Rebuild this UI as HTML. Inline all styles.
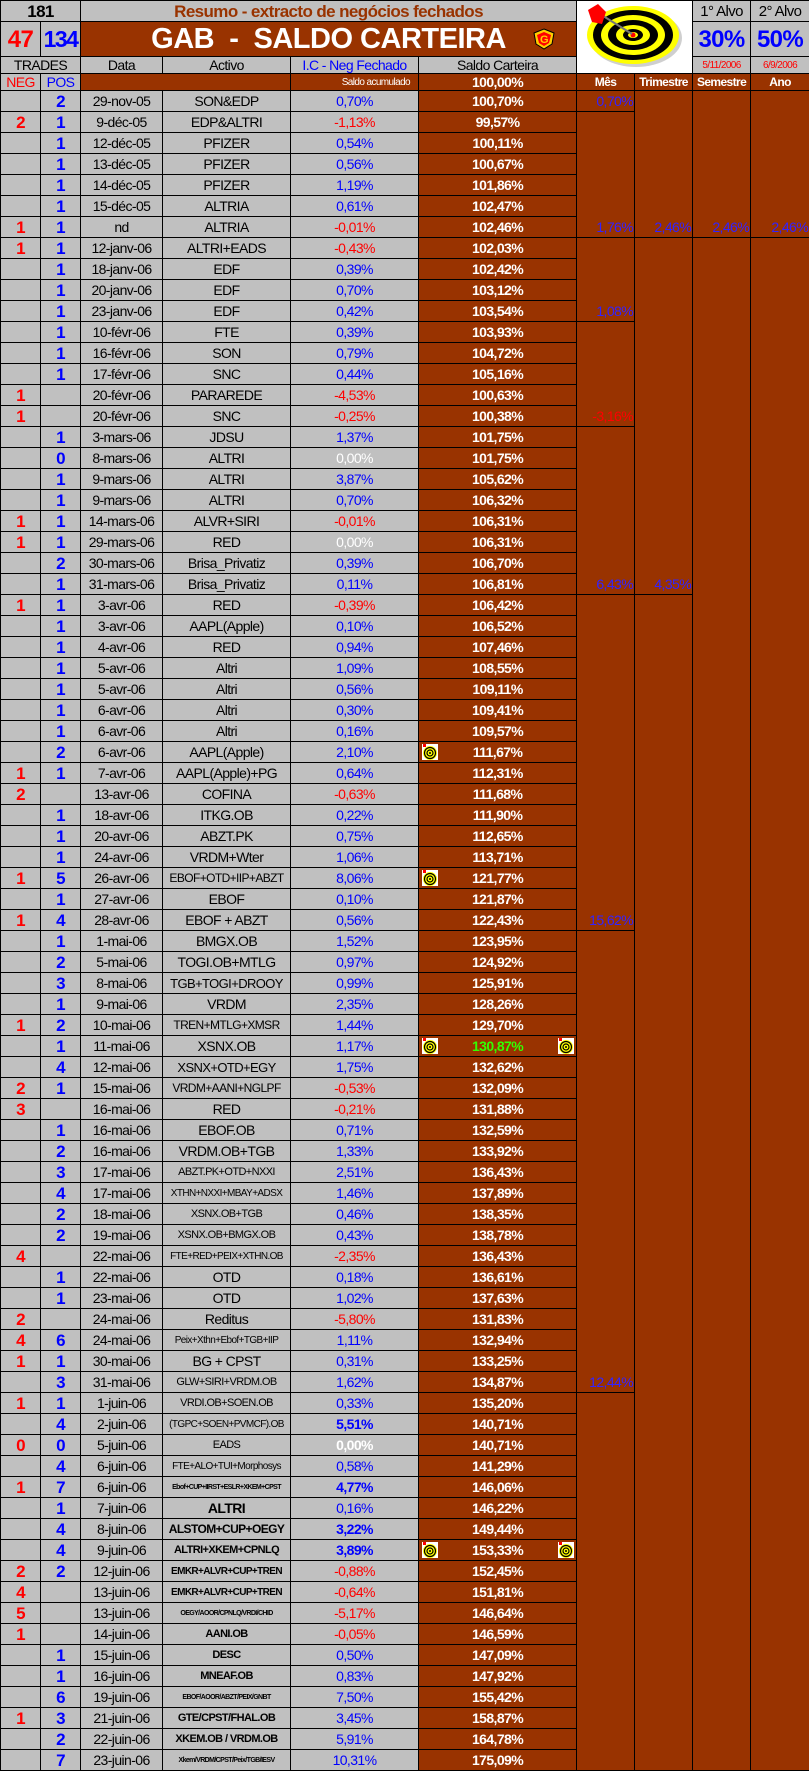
<!DOCTYPE html>
<html><head><meta charset="utf-8">
<style>
*{margin:0;padding:0;box-sizing:border-box}
body{width:809px;height:1771px;background:#c0c0c0;overflow:hidden;font-family:"Liberation Sans",Arial,sans-serif;position:relative}
table{border-collapse:collapse;table-layout:fixed;width:809px;position:absolute;left:0;top:0}
td{border:1px solid #000;background:#c0c0c0;text-align:center;vertical-align:middle;padding:0;font-size:14px;color:#000;white-space:nowrap;overflow:hidden;line-height:19px;letter-spacing:-0.6px}
tr.r{height:21px}
.n{color:#f00;font-weight:bold;font-size:17px}
.p{color:#00f;font-weight:bold;font-size:17px}
.i{color:#00f}
.x{color:#f00}
.w{color:#fff}
.b{font-weight:bold}
.s{background:#993300;color:#fff;font-weight:bold;position:relative}
.m{background:#993300;color:#3322ff;vertical-align:bottom;text-align:right;font-size:14px;padding-right:1px}
.br{background:#993300;color:#fff;font-weight:bold}
.sm{font-size:11px}
.xs{font-size:9px;font-weight:bold}
.ic{position:absolute;top:2px;width:16px;height:16px;background:#fff}
</style></head><body>
<table>
<colgroup><col style="width:40px"><col style="width:40px"><col style="width:82px"><col style="width:128px"><col style="width:128px"><col style="width:158px"><col style="width:58px"><col style="width:58px"><col style="width:58px"><col style="width:59px"></colgroup>
<tr style="height:21px"><td colspan="2" style="font-size:17px;font-weight:bold">181</td><td colspan="4" style="color:#993300;font-weight:bold;font-size:17px">Resumo - extracto de negócios fechados</td>
<td colspan="2" rowspan="3" style="background:#fff;position:relative">
<svg width="114" height="70" viewBox="0 0 114 70" style="position:absolute;left:1px;top:1px">
<ellipse cx="58" cy="36" rx="46" ry="29" fill="#888" opacity="0.4"/>
<ellipse cx="55" cy="33" rx="46" ry="29" fill="#ff0"/>
<ellipse cx="55" cy="33" rx="40" ry="25" fill="#000"/>
<ellipse cx="55" cy="33" rx="32" ry="20" fill="#ff0"/>
<ellipse cx="55" cy="33" rx="25" ry="15" fill="#000"/>
<ellipse cx="55" cy="33" rx="17" ry="10" fill="#ff0"/>
<ellipse cx="55" cy="33" rx="10" ry="6" fill="#000"/>
<ellipse cx="55" cy="33" rx="5" ry="3" fill="#ff0"/>
<circle cx="55" cy="33" r="2.5" fill="#f00"/>
<line x1="22" y1="12" x2="54" y2="32" stroke="#777" stroke-width="2"/>
<polygon points="10,8 20,2 28,10 24,22 14,20" fill="#f00"/>
</svg></td>
<td style="font-size:15px">1° Alvo</td><td style="font-size:15px">2° Alvo</td></tr>
<tr style="height:35px"><td style="color:#f00;font-size:24px;font-weight:bold">47</td><td style="color:#00f;font-size:23px;font-weight:bold;letter-spacing:-1.5px">134</td>
<td colspan="4" style="background:#993300;color:#fff;font-weight:bold;font-size:29px;letter-spacing:-0.5px;position:relative">GAB&nbsp; - &nbsp;SALDO CARTEIRA
<svg width="22" height="22" viewBox="0 0 22 22" style="position:absolute;left:452px;top:6px"><polygon points="11,1 21,5 19,16 11,21 3,16 1,5" fill="#ffcc00" stroke="#000" stroke-width="1"/><polygon points="11,4 18,7 16,15 11,18 6,15 4,7" fill="#f00"/><text x="11" y="15" font-size="11" font-weight="bold" fill="#ffcc00" text-anchor="middle" font-family="Liberation Sans">G</text></svg></td>
<td style="color:#00f;font-size:24px;font-weight:bold">30%</td><td style="color:#00f;font-size:24px;font-weight:bold">50%</td></tr>
<tr style="height:17px"><td colspan="2" style="font-size:14px;line-height:15px">TRADES</td><td style="line-height:15px">Data</td><td style="line-height:15px">Activo</td><td style="color:#00f;line-height:15px">I.C - Neg Fechado</td><td style="line-height:15px">Saldo Carteira</td><td style="color:#f00;font-size:10px;line-height:15px">5/11/2006</td><td style="color:#f00;font-size:10px;line-height:15px">6/9/2006</td></tr>
<tr style="height:17px"><td style="color:#f00;line-height:15px">NEG</td><td style="color:#00f;line-height:15px">POS</td><td colspan="2" class="br"></td><td class="br" style="font-size:10px;font-weight:normal;text-align:right;padding-right:8px;line-height:15px">Saldo acumulado</td><td class="br" style="line-height:15px">100,00%</td><td class="br" style="font-size:12px;line-height:15px">Mês</td><td class="br" style="font-size:12px;line-height:15px">Trimestre</td><td class="br" style="font-size:12px;line-height:15px">Semestre</td><td class="br" style="font-size:12px;line-height:15px">Ano</td></tr>

<tr class="r"><td></td><td class="p">2</td><td>29-nov-05</td><td>SON&amp;EDP</td><td class="i">0,70%</td><td class="s">100,70%</td><td class="m">0,70%</td><td class="m" rowspan="7">2,46%</td><td class="m" rowspan="7">2,46%</td><td class="m" rowspan="7">2,46%</td></tr>
<tr class="r"><td class="n">2</td><td class="p">1</td><td>9-déc-05</td><td>EDP&amp;ALTRI</td><td class="x">-1,13%</td><td class="s">99,57%</td><td class="m" rowspan="6">1,76%</td></tr>
<tr class="r"><td></td><td class="p">1</td><td>12-déc-05</td><td>PFIZER</td><td class="i">0,54%</td><td class="s">100,11%</td></tr>
<tr class="r"><td></td><td class="p">1</td><td>13-déc-05</td><td>PFIZER</td><td class="i">0,56%</td><td class="s">100,67%</td></tr>
<tr class="r"><td></td><td class="p">1</td><td>14-déc-05</td><td>PFIZER</td><td class="i">1,19%</td><td class="s">101,86%</td></tr>
<tr class="r"><td></td><td class="p">1</td><td>15-déc-05</td><td>ALTRIA</td><td class="i">0,61%</td><td class="s">102,47%</td></tr>
<tr class="r"><td class="n">1</td><td class="p">1</td><td>nd</td><td>ALTRIA</td><td class="x">-0,01%</td><td class="s">102,46%</td></tr>
<tr class="r"><td class="n">1</td><td class="p">1</td><td>12-janv-06</td><td>ALTRI+EADS</td><td class="x">-0,43%</td><td class="s">102,03%</td><td class="m" rowspan="4">1,08%</td><td class="m" rowspan="17">4,35%</td><td class="m" rowspan="73"></td><td class="m" rowspan="73"></td></tr>
<tr class="r"><td></td><td class="p">1</td><td>18-janv-06</td><td>EDF</td><td class="i">0,39%</td><td class="s">102,42%</td></tr>
<tr class="r"><td></td><td class="p">1</td><td>20-janv-06</td><td>EDF</td><td class="i">0,70%</td><td class="s">103,12%</td></tr>
<tr class="r"><td></td><td class="p">1</td><td>23-janv-06</td><td>EDF</td><td class="i">0,42%</td><td class="s">103,54%</td></tr>
<tr class="r"><td></td><td class="p">1</td><td>10-févr-06</td><td>FTE</td><td class="i">0,39%</td><td class="s">103,93%</td><td class="m" rowspan="5" style="color:#f00">-3,16%</td></tr>
<tr class="r"><td></td><td class="p">1</td><td>16-févr-06</td><td>SON</td><td class="i">0,79%</td><td class="s">104,72%</td></tr>
<tr class="r"><td></td><td class="p">1</td><td>17-févr-06</td><td>SNC</td><td class="i">0,44%</td><td class="s">105,16%</td></tr>
<tr class="r"><td class="n">1</td><td></td><td>20-févr-06</td><td>PARAREDE</td><td class="x">-4,53%</td><td class="s">100,63%</td></tr>
<tr class="r"><td class="n">1</td><td></td><td>20-févr-06</td><td>SNC</td><td class="x">-0,25%</td><td class="s">100,38%</td></tr>
<tr class="r"><td></td><td class="p">1</td><td>3-mars-06</td><td>JDSU</td><td class="i">1,37%</td><td class="s">101,75%</td><td class="m" rowspan="8">6,43%</td></tr>
<tr class="r"><td></td><td class="p">0</td><td>8-mars-06</td><td>ALTRI</td><td class="w">0,00%</td><td class="s">101,75%</td></tr>
<tr class="r"><td></td><td class="p">1</td><td>9-mars-06</td><td>ALTRI</td><td class="i">3,87%</td><td class="s">105,62%</td></tr>
<tr class="r"><td></td><td class="p">1</td><td>9-mars-06</td><td>ALTRI</td><td class="i">0,70%</td><td class="s">106,32%</td></tr>
<tr class="r"><td class="n">1</td><td class="p">1</td><td>14-mars-06</td><td>ALVR+SIRI</td><td class="x">-0,01%</td><td class="s">106,31%</td></tr>
<tr class="r"><td class="n">1</td><td class="p">1</td><td>29-mars-06</td><td>RED</td><td class="w">0,00%</td><td class="s">106,31%</td></tr>
<tr class="r"><td></td><td class="p">2</td><td>30-mars-06</td><td>Brisa_Privatiz</td><td class="i">0,39%</td><td class="s">106,70%</td></tr>
<tr class="r"><td></td><td class="p">1</td><td>31-mars-06</td><td>Brisa_Privatiz</td><td class="i">0,11%</td><td class="s">106,81%</td></tr>
<tr class="r"><td class="n">1</td><td class="p">1</td><td>3-avr-06</td><td>RED</td><td class="x">-0,39%</td><td class="s">106,42%</td><td class="m" rowspan="16">15,62%</td><td class="m" rowspan="56"></td></tr>
<tr class="r"><td></td><td class="p">1</td><td>3-avr-06</td><td>AAPL(Apple)</td><td class="i">0,10%</td><td class="s">106,52%</td></tr>
<tr class="r"><td></td><td class="p">1</td><td>4-avr-06</td><td>RED</td><td class="i">0,94%</td><td class="s">107,46%</td></tr>
<tr class="r"><td></td><td class="p">1</td><td>5-avr-06</td><td>Altri</td><td class="i">1,09%</td><td class="s">108,55%</td></tr>
<tr class="r"><td></td><td class="p">1</td><td>5-avr-06</td><td>Altri</td><td class="i">0,56%</td><td class="s">109,11%</td></tr>
<tr class="r"><td></td><td class="p">1</td><td>6-avr-06</td><td>Altri</td><td class="i">0,30%</td><td class="s">109,41%</td></tr>
<tr class="r"><td></td><td class="p">1</td><td>6-avr-06</td><td>Altri</td><td class="i">0,16%</td><td class="s">109,57%</td></tr>
<tr class="r"><td></td><td class="p">2</td><td>6-avr-06</td><td>AAPL(Apple)</td><td class="i">2,10%</td><td class="s"><svg class="ic" style="left:3px" viewBox="0 0 16 16"><circle cx="8" cy="9" r="7" fill="#ff0"/><circle cx="8" cy="9" r="5.5" fill="none" stroke="#000" stroke-width="1.2"/><circle cx="8" cy="9" r="3" fill="none" stroke="#000" stroke-width="1.2"/><circle cx="8" cy="9" r="1" fill="#000"/><rect x="1" y="0" width="3" height="3" fill="#f00"/></svg>111,67%</td></tr>
<tr class="r"><td class="n">1</td><td class="p">1</td><td>7-avr-06</td><td>AAPL(Apple)+PG</td><td class="i">0,64%</td><td class="s">112,31%</td></tr>
<tr class="r"><td class="n">2</td><td></td><td>13-avr-06</td><td>COFINA</td><td class="x">-0,63%</td><td class="s">111,68%</td></tr>
<tr class="r"><td></td><td class="p">1</td><td>18-avr-06</td><td>ITKG.OB</td><td class="i">0,22%</td><td class="s">111,90%</td></tr>
<tr class="r"><td></td><td class="p">1</td><td>20-avr-06</td><td>ABZT.PK</td><td class="i">0,75%</td><td class="s">112,65%</td></tr>
<tr class="r"><td></td><td class="p">1</td><td>24-avr-06</td><td>VRDM+Wter</td><td class="i">1,06%</td><td class="s">113,71%</td></tr>
<tr class="r"><td class="n">1</td><td class="p">5</td><td>26-avr-06</td><td style="font-size:12px">EBOF+OTD+IIP+ABZT</td><td class="i">8,06%</td><td class="s"><svg class="ic" style="left:3px" viewBox="0 0 16 16"><circle cx="8" cy="9" r="7" fill="#ff0"/><circle cx="8" cy="9" r="5.5" fill="none" stroke="#000" stroke-width="1.2"/><circle cx="8" cy="9" r="3" fill="none" stroke="#000" stroke-width="1.2"/><circle cx="8" cy="9" r="1" fill="#000"/><rect x="1" y="0" width="3" height="3" fill="#f00"/></svg>121,77%</td></tr>
<tr class="r"><td></td><td class="p">1</td><td>27-avr-06</td><td>EBOF</td><td class="i">0,10%</td><td class="s">121,87%</td></tr>
<tr class="r"><td class="n">1</td><td class="p">4</td><td>28-avr-06</td><td>EBOF + ABZT</td><td class="i">0,56%</td><td class="s">122,43%</td></tr>
<tr class="r"><td></td><td class="p">1</td><td>1-mai-06</td><td>BMGX.OB</td><td class="i">1,52%</td><td class="s">123,95%</td><td class="m" rowspan="22">12,44%</td></tr>
<tr class="r"><td></td><td class="p">2</td><td>5-mai-06</td><td>TOGI.OB+MTLG</td><td class="i">0,97%</td><td class="s">124,92%</td></tr>
<tr class="r"><td></td><td class="p">3</td><td>8-mai-06</td><td style="font-size:13px">TGB+TOGI+DROOY</td><td class="i">0,99%</td><td class="s">125,91%</td></tr>
<tr class="r"><td></td><td class="p">1</td><td>9-mai-06</td><td>VRDM</td><td class="i">2,35%</td><td class="s">128,26%</td></tr>
<tr class="r"><td class="n">1</td><td class="p">2</td><td>10-mai-06</td><td style="font-size:12px">TREN+MTLG+XMSR</td><td class="i">1,44%</td><td class="s">129,70%</td></tr>
<tr class="r"><td></td><td class="p">1</td><td>11-mai-06</td><td>XSNX.OB</td><td class="i">1,17%</td><td class="s" style="color:#33ff00"><svg class="ic" style="left:3px" viewBox="0 0 16 16"><circle cx="8" cy="9" r="7" fill="#ff0"/><circle cx="8" cy="9" r="5.5" fill="none" stroke="#000" stroke-width="1.2"/><circle cx="8" cy="9" r="3" fill="none" stroke="#000" stroke-width="1.2"/><circle cx="8" cy="9" r="1" fill="#000"/><rect x="1" y="0" width="3" height="3" fill="#f00"/></svg>130,87%<svg class="ic" style="left:139px" viewBox="0 0 16 16"><circle cx="8" cy="9" r="7" fill="#ff0"/><circle cx="8" cy="9" r="5.5" fill="none" stroke="#000" stroke-width="1.2"/><circle cx="8" cy="9" r="3" fill="none" stroke="#000" stroke-width="1.2"/><circle cx="8" cy="9" r="1" fill="#000"/><rect x="1" y="0" width="3" height="3" fill="#f00"/></svg></td></tr>
<tr class="r"><td></td><td class="p">4</td><td>12-mai-06</td><td style="font-size:13px">XSNX+OTD+EGY</td><td class="i">1,75%</td><td class="s">132,62%</td></tr>
<tr class="r"><td class="n">2</td><td class="p">1</td><td>15-mai-06</td><td style="font-size:12px">VRDM+AANI+NGLPF</td><td class="x">-0,53%</td><td class="s">132,09%</td></tr>
<tr class="r"><td class="n">3</td><td></td><td>16-mai-06</td><td>RED</td><td class="x">-0,21%</td><td class="s">131,88%</td></tr>
<tr class="r"><td></td><td class="p">1</td><td>16-mai-06</td><td>EBOF.OB</td><td class="i">0,71%</td><td class="s">132,59%</td></tr>
<tr class="r"><td></td><td class="p">2</td><td>16-mai-06</td><td>VRDM.OB+TGB</td><td class="i">1,33%</td><td class="s">133,92%</td></tr>
<tr class="r"><td></td><td class="p">3</td><td>17-mai-06</td><td class="sm">ABZT.PK+OTD+NXXI</td><td class="i">2,51%</td><td class="s">136,43%</td></tr>
<tr class="r"><td></td><td class="p">4</td><td>17-mai-06</td><td class="sm" style="font-size:10px">XTHN+NXXI+MBAY+ADSX</td><td class="i">1,46%</td><td class="s">137,89%</td></tr>
<tr class="r"><td></td><td class="p">2</td><td>18-mai-06</td><td class="sm">XSNX.OB+TGB</td><td class="i">0,46%</td><td class="s">138,35%</td></tr>
<tr class="r"><td></td><td class="p">2</td><td>19-mai-06</td><td class="sm">XSNX.OB+BMGX.OB</td><td class="i">0,43%</td><td class="s">138,78%</td></tr>
<tr class="r"><td class="n">4</td><td></td><td>22-mai-06</td><td class="sm" style="font-size:10px">FTE+RED+PEIX+XTHN.OB</td><td class="x">-2,35%</td><td class="s">136,43%</td></tr>
<tr class="r"><td></td><td class="p">1</td><td>22-mai-06</td><td>OTD</td><td class="i">0,18%</td><td class="s">136,61%</td></tr>
<tr class="r"><td></td><td class="p">1</td><td>23-mai-06</td><td>OTD</td><td class="i">1,02%</td><td class="s">137,63%</td></tr>
<tr class="r"><td class="n">2</td><td></td><td>24-mai-06</td><td>Reditus</td><td class="x">-5,80%</td><td class="s">131,83%</td></tr>
<tr class="r"><td class="n">4</td><td class="p">6</td><td>24-mai-06</td><td class="sm" style="font-size:10px">Peix+Xthn+Ebof+TGB+IIP</td><td class="i">1,11%</td><td class="s">132,94%</td></tr>
<tr class="r"><td class="n">1</td><td class="p">1</td><td>30-mai-06</td><td>BG + CPST</td><td class="i">0,31%</td><td class="s">133,25%</td></tr>
<tr class="r"><td></td><td class="p">3</td><td>31-mai-06</td><td class="sm">GLW+SIRI+VRDM.OB</td><td class="i">1,62%</td><td class="s">134,87%</td></tr>
<tr class="r"><td class="n">1</td><td class="p">1</td><td>1-juin-06</td><td class="sm">VRDI.OB+SOEN.OB</td><td class="i">0,33%</td><td class="s">135,20%</td><td class="m" rowspan="18"></td></tr>
<tr class="r"><td></td><td class="p">4</td><td>2-juin-06</td><td class="sm" style="font-size:10px">(TGPC+SOEN+PVMCF).OB</td><td class="i b">5,51%</td><td class="s">140,71%</td></tr>
<tr class="r"><td class="n">0</td><td class="p">0</td><td>5-juin-06</td><td class="sm">EADS</td><td class="w b">0,00%</td><td class="s">140,71%</td></tr>
<tr class="r"><td></td><td class="p">4</td><td>6-juin-06</td><td class="sm" style="font-size:10px">FTE+ALO+TUI+Morphosys</td><td class="i">0,58%</td><td class="s">141,29%</td></tr>
<tr class="r"><td class="n">1</td><td class="p">7</td><td>6-juin-06</td><td class="xs" style="font-size:7px">Ebof+CUP+IIRST+ESLR+XKEM+CPST</td><td class="i b">4,77%</td><td class="s">146,06%</td></tr>
<tr class="r"><td></td><td class="p">1</td><td>7-juin-06</td><td class="b">ALTRI</td><td class="i">0,16%</td><td class="s">146,22%</td></tr>
<tr class="r"><td></td><td class="p">4</td><td>8-juin-06</td><td class="b" style="font-size:12px">ALSTOM+CUP+OEGY</td><td class="i b">3,22%</td><td class="s">149,44%</td></tr>
<tr class="r"><td></td><td class="p">4</td><td>9-juin-06</td><td class="b" style="font-size:11px">ALTRI+XKEM+CPNLQ</td><td class="i b">3,89%</td><td class="s"><svg class="ic" style="left:3px" viewBox="0 0 16 16"><circle cx="8" cy="9" r="7" fill="#ff0"/><circle cx="8" cy="9" r="5.5" fill="none" stroke="#000" stroke-width="1.2"/><circle cx="8" cy="9" r="3" fill="none" stroke="#000" stroke-width="1.2"/><circle cx="8" cy="9" r="1" fill="#000"/><rect x="1" y="0" width="3" height="3" fill="#f00"/></svg>153,33%<svg class="ic" style="left:139px" viewBox="0 0 16 16"><circle cx="8" cy="9" r="7" fill="#ff0"/><circle cx="8" cy="9" r="5.5" fill="none" stroke="#000" stroke-width="1.2"/><circle cx="8" cy="9" r="3" fill="none" stroke="#000" stroke-width="1.2"/><circle cx="8" cy="9" r="1" fill="#000"/><rect x="1" y="0" width="3" height="3" fill="#f00"/></svg></td></tr>
<tr class="r"><td class="n">2</td><td class="p">2</td><td>12-juin-06</td><td class="xs" style="font-size:10px">EMKR+ALVR+CUP+TREN</td><td class="x">-0,88%</td><td class="s">152,45%</td></tr>
<tr class="r"><td class="n">4</td><td></td><td>13-juin-06</td><td class="xs" style="font-size:10px">EMKR+ALVR+CUP+TREN</td><td class="x">-0,64%</td><td class="s">151,81%</td></tr>
<tr class="r"><td class="n">5</td><td></td><td>13-juin-06</td><td class="xs" style="font-size:7px">OEGY/AOOR/CPNLQ/VRDI/CHID</td><td class="x">-5,17%</td><td class="s">146,64%</td></tr>
<tr class="r"><td class="n">1</td><td></td><td>14-juin-06</td><td class="b" style="font-size:11px">AANI.OB</td><td class="x">-0,05%</td><td class="s">146,59%</td></tr>
<tr class="r"><td></td><td class="p">1</td><td>15-juin-06</td><td class="b" style="font-size:11px">DESC</td><td class="i">0,50%</td><td class="s">147,09%</td></tr>
<tr class="r"><td></td><td class="p">1</td><td>16-juin-06</td><td class="b" style="font-size:11px">MNEAF.OB</td><td class="i">0,83%</td><td class="s">147,92%</td></tr>
<tr class="r"><td></td><td class="p">6</td><td>19-juin-06</td><td class="xs" style="font-size:7px">EBOF/AOOR/ABZT/PEIX/GNBT</td><td class="i">7,50%</td><td class="s">155,42%</td></tr>
<tr class="r"><td class="n">1</td><td class="p">3</td><td>21-juin-06</td><td class="b" style="font-size:11px">GTE/CPST/FHAL.OB</td><td class="i">3,45%</td><td class="s">158,87%</td></tr>
<tr class="r"><td></td><td class="p">2</td><td>22-juin-06</td><td class="b" style="font-size:11px">XKEM.OB / VRDM.OB</td><td class="i">5,91%</td><td class="s">164,78%</td></tr>
<tr class="r"><td></td><td class="p">7</td><td>23-juin-06</td><td class="xs" style="font-size:7px">Xkem/VRDM/CPST/Peix/TGB/IESV</td><td class="i">10,31%</td><td class="s">175,09%</td></tr>
</table>
</body></html>
